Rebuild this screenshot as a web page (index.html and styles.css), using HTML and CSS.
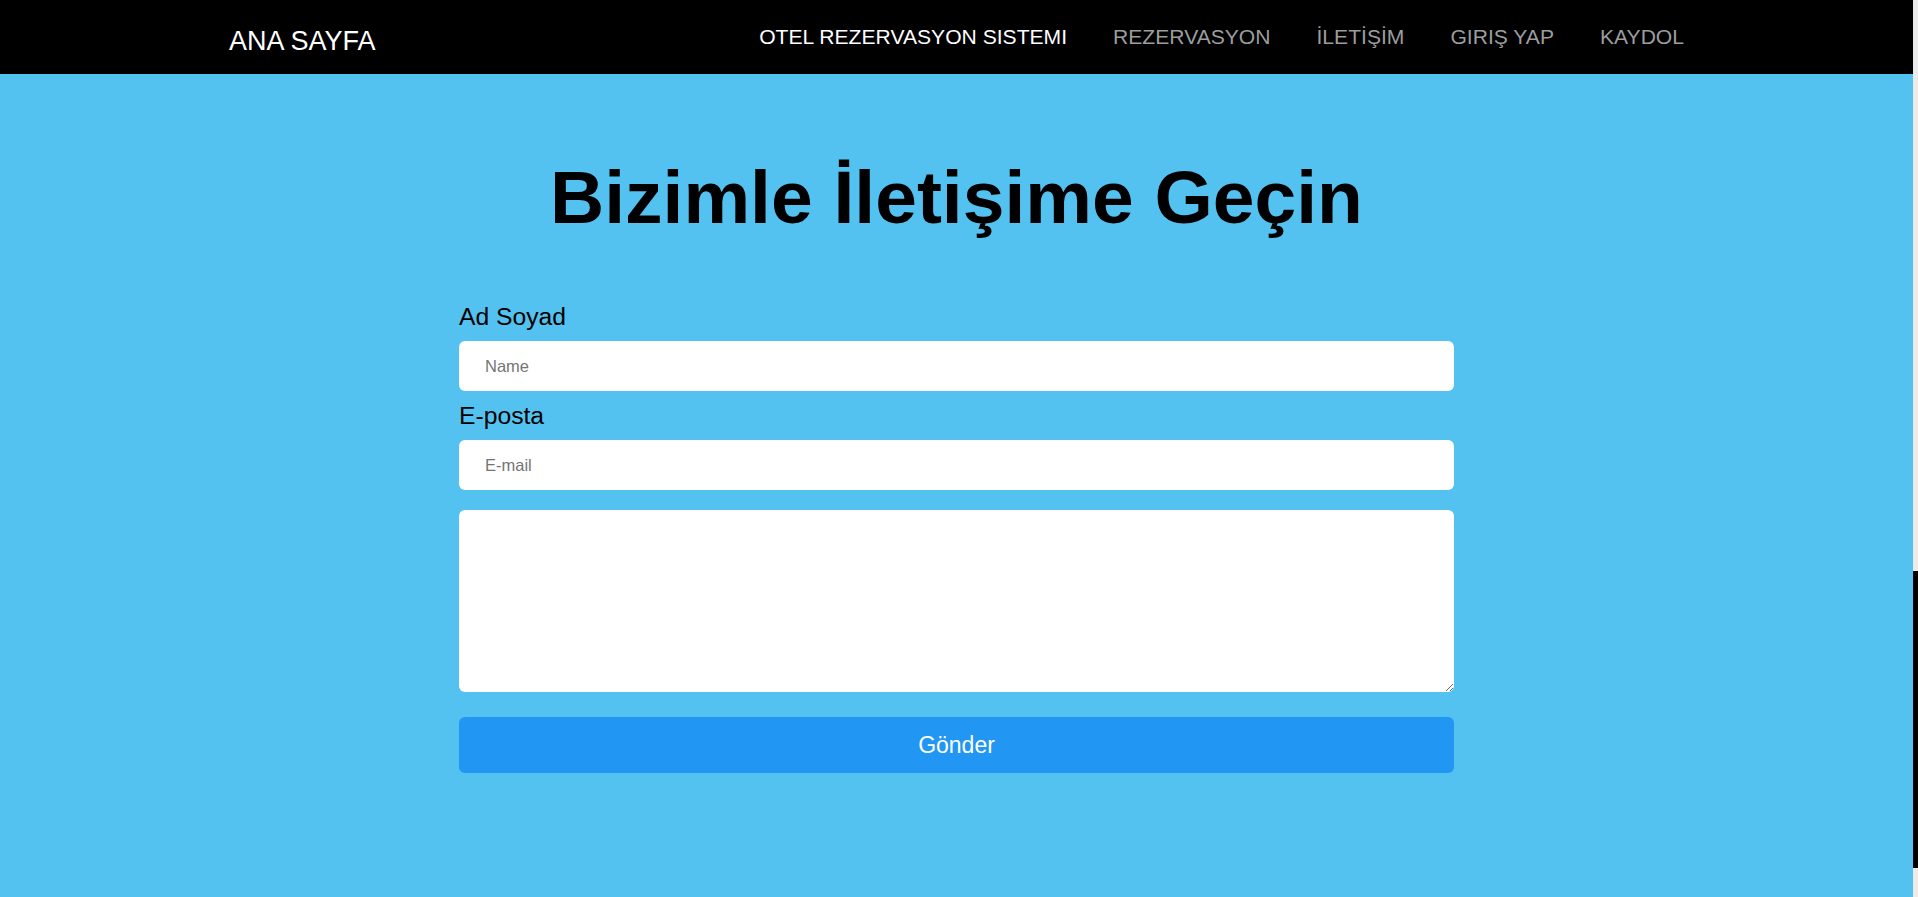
FILE: index.html
```html
<!DOCTYPE html>
<html lang="tr">
<head>
<meta charset="utf-8">
<title>Bizimle İletişime Geçin</title>
<link rel="stylesheet" href="styles.css">
</head>
<body>
<div class="page">
  <div class="main">
    <nav class="navbar">
      <a class="brand" href="#">ANA SAYFA</a>
      <ul class="nav-links">
        <li><a class="active" href="#">OTEL REZERVASYON SISTEMI</a></li>
        <li><a href="#">REZERVASYON</a></li>
        <li><a href="#">İLETİŞİM</a></li>
        <li><a href="#">GIRIŞ YAP</a></li>
        <li><a href="#">KAYDOL</a></li>
      </ul>
    </nav>
    <section class="contact">
      <h1 class="title">Bizimle İletişime Geçin</h1>
      <form class="form">
        <label class="label" for="name">Ad Soyad</label>
        <input class="field" id="name" type="text" placeholder="Name">
        <label class="label" for="email">E-posta</label>
        <input class="field field-last" id="email" type="email" placeholder="E-mail">
        <textarea class="message"></textarea>
        <button class="submit" type="button">Gönder</button>
      </form>
    </section>
  </div>
  <div class="scrollbar"><div class="thumb"></div></div>
</div>
</body>
</html>
```

FILE: styles.css
```css
html, body {
  margin: 0;
  padding: 0;
  height: 100%;
  overflow: hidden;
}
body {
  background: #54c2f0;
  font-family: "Liberation Sans", Arial, sans-serif;
  color: #000;
}
.page {
  display: flex;
  min-height: 100vh;
}
.main {
  flex: 1;
  min-width: 0;
}
.scrollbar {
  width: 5px;
  background: #ebebeb;
}
.thumb {
  margin-top: 571px;
  height: 297px;
  background: #000;
}
.navbar {
  height: 74px;
  background: #000;
  display: flex;
  align-items: center;
  justify-content: space-between;
  padding: 0 229px;
}
.brand {
  color: #fff;
  text-decoration: none;
  font-size: 27px;
  line-height: 30px;
  padding-top: 7px;
}
.nav-links {
  list-style: none;
  margin: 0;
  padding: 0;
  display: flex;
  gap: 46px;
}
.nav-links a {
  color: #9d9d9d;
  text-decoration: none;
  font-size: 21.1px;
  line-height: 24px;
}
.nav-links a.active {
  color: #fff;
}
.contact {
  padding-top: 80px;
}
.title {
  margin: 0 0 63px;
  text-align: center;
  font-size: 75px;
  line-height: 86px;
  font-weight: bold;
}
.form {
  width: 995px;
  margin: 0 auto;
  display: flex;
  flex-direction: column;
}
.label {
  font-size: 24.7px;
  line-height: 28px;
  margin-bottom: 10px;
}
.field {
  height: 50px;
  box-sizing: border-box;
  border: none;
  border-radius: 6px;
  background: #fff;
  padding: 0 26px;
  font-family: "Liberation Sans", Arial, sans-serif;
  font-size: 16.5px;
  margin: 0 0 11px;
  outline: none;
}
.field::placeholder {
  color: #757575;
}
.field-last {
  margin-bottom: 20px;
}
.message {
  height: 182px;
  box-sizing: border-box;
  border: none;
  border-radius: 6px;
  background: #fff;
  margin: 0 0 25px;
  padding: 10px 26px;
  font-family: "Liberation Sans", Arial, sans-serif;
  font-size: 16.5px;
  outline: none;
}
.submit {
  height: 56px;
  border: none;
  border-radius: 6px;
  background: #2196f3;
  color: #fff;
  font-family: "Liberation Sans", Arial, sans-serif;
  font-size: 23px;
  cursor: pointer;
}
```
